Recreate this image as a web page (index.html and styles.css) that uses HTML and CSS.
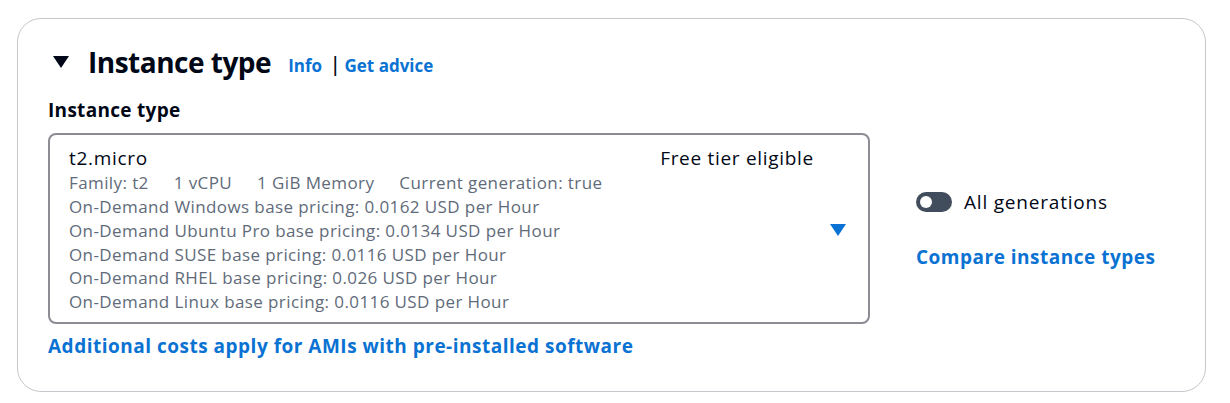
FILE: index.html
```html
<!DOCTYPE html>
<html>
<head>
<meta charset="utf-8">
<link rel="stylesheet" href="styles.css">
</head>
<body>
<div class="card">
  <div class="header">
    <svg class="caret" width="18" height="14" viewBox="0 0 18 14"><polygon points="1,1 17,1 9,13" fill="#000716"/></svg>
    <h2 class="title">Instance type</h2>
    <a class="link small">Info</a>
    <span class="sep">|</span>
    <a class="link small">Get advice</a>
  </div>
  <div class="body">
    <div class="left">
      <div class="label">Instance type</div>
      <div class="select">
        <div class="select-main">
          <div class="top-row">
            <span class="name">t2.micro</span>
            <span class="tag">Free tier eligible</span>
          </div>
          <div class="meta">
            <span>Family: t2</span><span>1 vCPU</span><span>1 GiB Memory</span><span>Current generation: true</span>
          </div>
          <div class="line">On-Demand Windows base pricing: 0.0162 USD per Hour</div>
          <div class="line">On-Demand Ubuntu Pro base pricing: 0.0134 USD per Hour</div>
          <div class="line">On-Demand SUSE base pricing: 0.0116 USD per Hour</div>
          <div class="line">On-Demand RHEL base pricing: 0.026 USD per Hour</div>
          <div class="line">On-Demand Linux base pricing: 0.0116 USD per Hour</div>
        </div>
        <svg class="drop" width="16" height="12" viewBox="0 0 16 12"><polygon points="0,0 16,0 8,12" fill="#0972d3"/></svg>
      </div>
      <a class="link big">Additional costs apply for AMIs with pre-installed software</a>
    </div>
    <div class="right">
      <div class="toggle-row">
        <span class="toggle"><span class="knob"></span></span>
        <span class="toggle-label">All generations</span>
      </div>
      <a class="link big">Compare instance types</a>
    </div>
  </div>
</div>
</body>
</html>
```
FILE: styles.css
```css
* { box-sizing: border-box; }
body {
  margin: 0;
  background: #fff;
  font-family: "Open Sans", "Noto Sans", sans-serif;
  color: #000716;
}
.card {
  margin: 18px 24px 0 17px;
  width: 1189px;
  height: 374px;
  border: 1px solid #c6c6cd;
  border-radius: 24px;
  padding: 23px 30px 0 30px;
}
.header {
  display: flex;
  align-items: center;
  height: 40px;
}
.caret { margin-left: 4px; margin-right: 18px; }
.title {
  margin: 0;
  font-size: 28px;
  font-weight: 700;
  letter-spacing: -0.5px;
  margin-right: 17px;
}
.link {
  color: #0972d3;
  font-weight: 700;
  text-decoration: none;
}
.small { font-size: 17px; margin-top: 6px; }
.sep { font-size: 19px; font-weight: 600; margin: 4px 4px 0 8px; color: #000716; }
.body {
  display: flex;
  margin-top: 16px;
}
.left { width: 822px; display: flex; flex-direction: column; }
.label {
  font-size: 19px;
  font-weight: 700;
  letter-spacing: 0.3px;
  line-height: 24px;
  margin-bottom: 11px;
}
.select {
  border: 2px solid #8c8c94;
  border-radius: 8px;
  height: 191px;
  display: flex;
  align-items: center;
  padding: 2px 22px 0 19px;
}
.select-main { flex: 1; }
.top-row {
  display: flex;
  justify-content: space-between;
  font-size: 19px;
  letter-spacing: 0.7px;
  line-height: 26px;
  padding-right: 16px;
}
.meta, .line {
  font-size: 17px;
  letter-spacing: 0.4px;
  line-height: 23.8px;
  color: #5f6b7a;
}
.meta span { margin-right: 25px; }
.drop { margin-top: 0; }
.big { font-size: 19px; letter-spacing: 0.5px; margin-top: 10px; line-height: 24px; }
.right {
  margin-left: 46px;
  display: flex;
  flex-direction: column;
  padding-top: 92px;
}
.toggle-row { display: flex; align-items: center; }
.toggle {
  width: 36px;
  height: 20px;
  background: #414d5c;
  border-radius: 10px;
  position: relative;
  margin-right: 12px;
}
.knob {
  position: absolute;
  left: 4px;
  top: 4px;
  width: 12px;
  height: 12px;
  border-radius: 50%;
  background: #fff;
}
.toggle-label { font-size: 19px; letter-spacing: 0.8px; line-height: 24px; }
.right .big { margin-top: 31px; }
```
